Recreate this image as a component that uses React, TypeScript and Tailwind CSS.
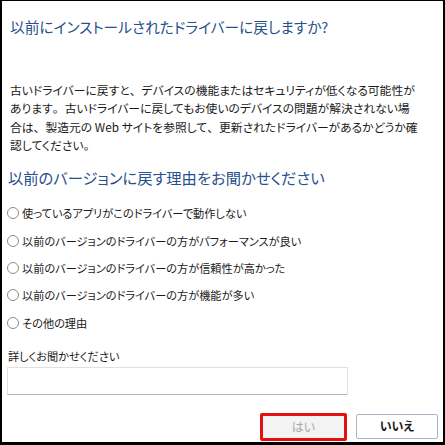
import React from "react";

const jp = {
  fontFamily: '"Noto Sans CJK JP", "Noto Sans", sans-serif',
};

function P({ c }: { c: string }) {
  return <span className="[font-feature-settings:normal]">{c}</span>;
}

function Radio({ label }: { label: string }) {
  return (
    <div className="flex items-center h-[27.3px]">
      <span className="w-[12px] h-[12px] rounded-full border border-[#8c8c8c] bg-white shrink-0 ml-[1px]" />
      <span className="ml-[3px] text-[11.2px] leading-[18px] text-[#1a1a1a]">{label}</span>
    </div>
  );
}

export default function App() {
  return (
    <div
      className="w-[445px] h-[445px] bg-white border-t border-l-2 border-r-2 border-b-[3px] border-black flex flex-col overflow-hidden [font-feature-settings:'palt']"
      style={jp}
    >
      <div className="pl-[8px] pt-[16px] text-[14.7px] leading-[20px] text-[#27508c] whitespace-nowrap">
        以前にインストールされたドライバーに戻しますか?
      </div>
      <div className="pl-[8px] mt-[44px] text-[11.8px] leading-[18.3px] text-[#1a1a1a] whitespace-nowrap">
        <div>
          古いドライバーに戻すと<P c="、" />デバイスの機能またはセキュリティが低くなる可能性が
        </div>
        <div>
          あります<P c="。" />古いドライバーに戻してもお使いのデバイスの問題が解決されない場
        </div>
        <div>
          合は<P c="、" />製造元の Web サイトを参照して<P c="、" />更新されたドライバーがあるかどうか確
        </div>
        <div>
          認してください<P c="。" />
        </div>
      </div>
      <div className="pl-[6px] mt-[13px] text-[15.3px] leading-[20px] text-[#27508c] whitespace-nowrap">
        以前のバージョンに戻す理由をお聞かせください
      </div>
      <div className="pl-[4px] mt-[12.5px] flex flex-col">
        <Radio label="使っているアプリがこのドライバーで動作しない" />
        <Radio label="以前のバージョンのドライバーの方がパフォーマンスが良い" />
        <Radio label="以前のバージョンのドライバーの方が信頼性が高かった" />
        <Radio label="以前のバージョンのドライバーの方が機能が多い" />
        <Radio label="その他の理由" />
      </div>
      <div className="pl-[6px] mt-[10.5px] text-[11.2px] leading-[18px] text-[#1a1a1a]">
        詳しくお聞かせください
      </div>
      <div className="ml-[5px] mt-[2px] w-[341px] h-[28px] border border-[#e0e0e0] border-b-[#b8b8b8] bg-white" />
      <div className="mt-[18px] flex justify-end items-start gap-[9px] pr-[5px]">
        <div className="w-[87px] h-[28px] border-[3px] border-[#e50f0f] rounded-[2px] bg-[#f3f3f3] flex items-center justify-center text-[12px] text-[#a8a8a8]">
          はい
        </div>
        <div className="mt-[1px] w-[82px] h-[25px] border border-[#a9b6c9] rounded-[2px] bg-white flex items-center justify-center text-[12px] font-bold text-[#1a1a1a]">
          いいえ
        </div>
      </div>
    </div>
  );
}
